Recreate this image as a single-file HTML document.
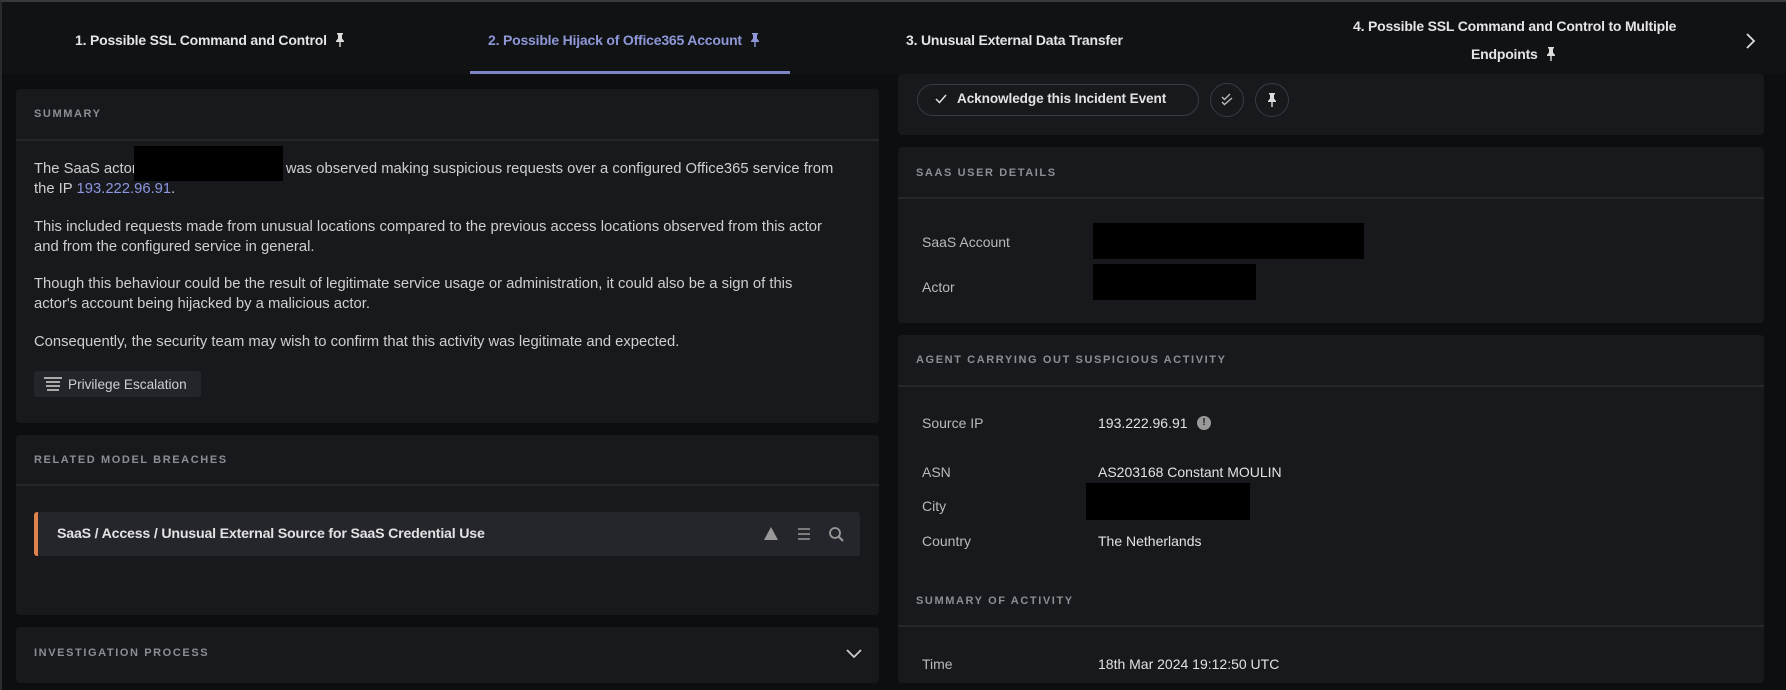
<!DOCTYPE html>
<html><head><meta charset="utf-8"><style>
*{box-sizing:border-box;margin:0;padding:0}
body{width:1786px;height:690px;background:#0d0e10;font-family:"Liberation Sans",sans-serif;color:#d6d6d8;position:relative;overflow:hidden;border-top:2px solid #3a3b3e;border-left:2px solid #2a2b2e}
.a{position:absolute}
.tabs{left:0;top:0;width:1786px;height:72px;background:#111214}
.tab{position:absolute;font-size:14px;font-weight:bold;color:#e4e4e6;letter-spacing:-0.2px;white-space:nowrap}
.card{position:absolute;background:#18191d;border-radius:4px}
.h{position:absolute;font-size:11px;font-weight:bold;letter-spacing:1.6px;color:#8d8e93}
.div{position:absolute;height:2px;background:#26272b}
.p{position:absolute;font-size:14.8px;color:#cfcfd2;line-height:19.5px;white-space:nowrap}
.red{position:absolute;background:#000}
.lbl{position:absolute;font-size:14px;color:#b9babd}
.val{position:absolute;font-size:14px;color:#e2e2e4}
.circ{position:absolute;width:34px;height:34px;border:1.5px solid #3a3b40;border-radius:50%}
.pin{display:inline-block;vertical-align:-2px;margin-left:8px}
</style></head><body>
<svg width="0" height="0" style="position:absolute"><defs><symbol id="pin" viewBox="0 0 10 14"><path d="M2 0h6v1.5H7v4l2 2.5v1H5.7v5H4.3v-5H1V8l2-2.5v-4H2z" fill="currentColor"/></symbol></defs></svg>
<div class="a tabs"></div>
<div class="tab" style="left:73px;top:30px">1. Possible SSL Command and Control<svg class="pin" width="10" height="14" style="color:#ddd"><use href="#pin"/></svg></div>
<div class="tab" style="left:486px;top:30px;color:#8e97d8">2. Possible Hijack of Office365 Account<svg class="pin" width="10" height="14" style="color:#8e97d8"><use href="#pin"/></svg></div>
<div class="a" style="left:468px;top:69px;width:320px;height:3px;background:#7d86c4"></div>
<div class="tab" style="left:904px;top:30px">3. Unusual External Data Transfer</div>
<div class="tab" style="left:1351px;top:16px">4. Possible SSL Command and Control to Multiple</div>
<div class="tab" style="left:1469px;top:44px">Endpoints<svg class="pin" width="10" height="14" style="color:#ddd"><use href="#pin"/></svg></div>
<svg class="a" style="left:1742px;top:30px" width="12" height="18"><path d="M3 2l7 7-7 7" stroke="#ddd" stroke-width="1.8" fill="none"/></svg>

<div class="card" style="left:14px;top:87px;width:863px;height:334px"></div>
<div class="h" style="left:32px;top:106px">SUMMARY</div>
<div class="div" style="left:14px;top:137px;width:863px"></div>
<div class="p" style="left:32px;top:158px">The SaaS actor<span style="display:inline-block;width:149px"></span>was observed making suspicious requests over a configured Office365 service from<br>the IP <span style="color:#8b97e0">193.222.96.91</span>.</div>
<div class="red" style="left:132px;top:144px;width:149px;height:35px"></div>
<div class="p" style="left:32px;top:216px">This included requests made from unusual locations compared to the previous access locations observed from this actor<br>and from the configured service in general.</div>
<div class="p" style="left:32px;top:273px">Though this behaviour could be the result of legitimate service usage or administration, it could also be a sign of this<br>actor's account being hijacked by a malicious actor.</div>
<div class="p" style="left:32px;top:331px">Consequently, the security team may wish to confirm that this activity was legitimate and expected.</div>
<div class="a" style="left:32px;top:369px;width:167px;height:26px;background:#23252b;border-radius:3px"></div>
<svg class="a" style="left:42px;top:375px" width="18" height="14"><g fill="#aaa"><rect x="0" y="0" width="18" height="2"/><rect x="2" y="4" width="14" height="2"/><rect x="2" y="8" width="14" height="2"/><rect x="3" y="12" width="12" height="2"/></g></svg>
<div class="p" style="left:66px;top:373px;font-size:13.6px">Privilege Escalation</div>

<div class="card" style="left:14px;top:433px;width:863px;height:180px"></div>
<div class="h" style="left:32px;top:452px">RELATED MODEL BREACHES</div>
<div class="div" style="left:14px;top:482px;width:863px"></div>
<div class="a" style="left:32px;top:510px;width:826px;height:44px;background:#25262b;border-radius:3px;border-left:4px solid #e0834a"></div>
<div class="val" style="left:55px;top:524px;font-weight:bold;font-size:14.2px;letter-spacing:-0.2px">SaaS / Access / Unusual External Source for SaaS Credential Use</div>
<svg class="a" style="left:760px;top:523px" width="100" height="18"><path d="M9 2l7 13H2z" fill="#999"/><g stroke="#999" stroke-width="1.6"><path d="M36 4h12M36 9h12M36 14h12"/></g><circle cx="73" cy="8" r="5" stroke="#999" stroke-width="1.8" fill="none"/><path d="M77 12l4 4" stroke="#999" stroke-width="2"/></svg>

<div class="card" style="left:14px;top:625px;width:863px;height:56px"></div>
<div class="h" style="left:32px;top:645px">INVESTIGATION PROCESS</div>
<svg class="a" style="left:843px;top:646px" width="18" height="12"><path d="M2 2l7 7 7-7" stroke="#ccc" stroke-width="1.8" fill="none"/></svg>

<div class="card" style="left:896px;top:72px;width:866px;height:61px"></div>
<div class="a" style="left:915px;top:82px;width:282px;height:32px;border:1.5px solid #3a3b40;border-radius:16px"></div>
<svg class="a" style="left:933px;top:92px" width="12" height="10"><path d="M1 5l3.5 3.5L11 1" stroke="#ddd" stroke-width="1.5" fill="none"/></svg>
<div class="val" style="left:955px;top:89px;font-weight:bold;font-size:13.6px;letter-spacing:-0.1px">Acknowledge this Incident Event</div>
<div class="circ" style="left:1208px;top:81px"></div>
<svg class="a" style="left:1218px;top:91px" width="14" height="14"><path d="M2 4l2.5 2.5L10 1M2 9l2.5 2.5L12 5" stroke="#bbb" stroke-width="1.4" fill="none"/></svg>
<div class="circ" style="left:1253px;top:81px"></div>
<svg class="a" style="left:1265px;top:91px;color:#ddd" width="10" height="14"><use href="#pin"/></svg>

<div class="card" style="left:896px;top:145px;width:866px;height:176px"></div>
<div class="h" style="left:914px;top:165px">SAAS USER DETAILS</div>
<div class="div" style="left:896px;top:195px;width:866px"></div>
<div class="lbl" style="left:920px;top:232px">SaaS Account</div>
<div class="red" style="left:1091px;top:221px;width:271px;height:36px"></div>
<div class="lbl" style="left:920px;top:277px">Actor</div>
<div class="red" style="left:1091px;top:262px;width:163px;height:36px"></div>

<div class="card" style="left:896px;top:333px;width:866px;height:348px"></div>
<div class="h" style="left:914px;top:352px">AGENT CARRYING OUT SUSPICIOUS ACTIVITY</div>
<div class="div" style="left:896px;top:383px;width:866px"></div>
<div class="lbl" style="left:920px;top:413px">Source IP</div>
<div class="val" style="left:1096px;top:413px">193.222.96.91</div>
<div class="a" style="left:1195px;top:414px;width:14px;height:14px;border-radius:50%;background:#999;color:#18191d;font-size:10px;font-weight:bold;text-align:center;line-height:14px">!</div>
<div class="lbl" style="left:920px;top:462px">ASN</div>
<div class="val" style="left:1096px;top:462px">AS203168 Constant MOULIN</div>
<div class="lbl" style="left:920px;top:496px">City</div>
<div class="red" style="left:1084px;top:481px;width:164px;height:37px"></div>
<div class="lbl" style="left:920px;top:531px">Country</div>
<div class="val" style="left:1096px;top:531px">The Netherlands</div>
<div class="h" style="left:914px;top:593px">SUMMARY OF ACTIVITY</div>
<div class="div" style="left:896px;top:623px;width:866px"></div>
<div class="lbl" style="left:920px;top:654px">Time</div>
<div class="val" style="left:1096px;top:654px">18th Mar 2024 19:12:50 UTC</div>
</body></html>
